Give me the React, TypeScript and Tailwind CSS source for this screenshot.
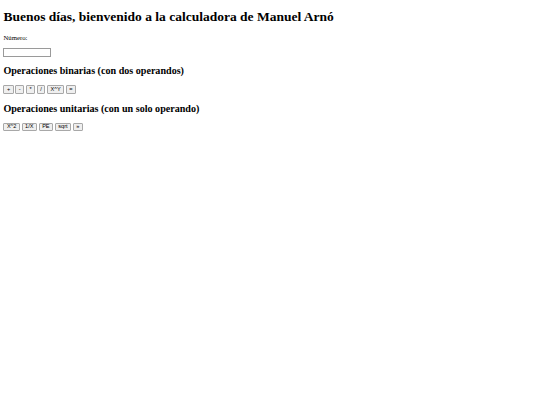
import React from "react";

const binarias = ["+", "-", "*", "/", "X^Y", "="];
const unitarias = ["X^2", "1/X", "PE", "sqrt", "»"];

function Boton({ label }: { label: string }) {
  return (
    <button className="h-[8.9px] px-[2.5px] mr-[1.7px] border border-[#a8a8a8] rounded-[1px] bg-[#efefef] text-[5.6px] leading-none text-black font-[family-name:'Liberation_Sans',Arial,sans-serif]">
      {label}
    </button>
  );
}

export default function App() {
  return (
    <div className="min-h-[405px] bg-white px-[3.4px] pt-[9px] text-black font-[family-name:'Liberation_Serif','Times_New_Roman',serif]">
      <h1 className="text-[13.5px] font-bold leading-[15.5px]">
        Buenos días, bienvenido a la calculadora de Manuel Arnó
      </h1>
      <p className="mt-[9px] text-[6.75px] leading-[7.8px]">Número:</p>
      <input
        type="text"
        className="block mt-[6.75px] w-[48px] h-[8.9px] border border-[#9a9a9a] bg-white"
      />
      <h2 className="mt-[8.4px] text-[10.1px] font-bold leading-[11.6px]">
        Operaciones binarias (con dos operandos)
      </h2>
      <div className="mt-[8.4px] flex">
        {binarias.map((b) => (
          <Boton key={b} label={b} />
        ))}
      </div>
      <h2 className="mt-[8.4px] text-[10.1px] font-bold leading-[11.6px]">
        Operaciones unitarias (con un solo operando)
      </h2>
      <div className="mt-[8.4px] flex">
        {unitarias.map((b) => (
          <Boton key={b} label={b} />
        ))}
      </div>
    </div>
  );
}
